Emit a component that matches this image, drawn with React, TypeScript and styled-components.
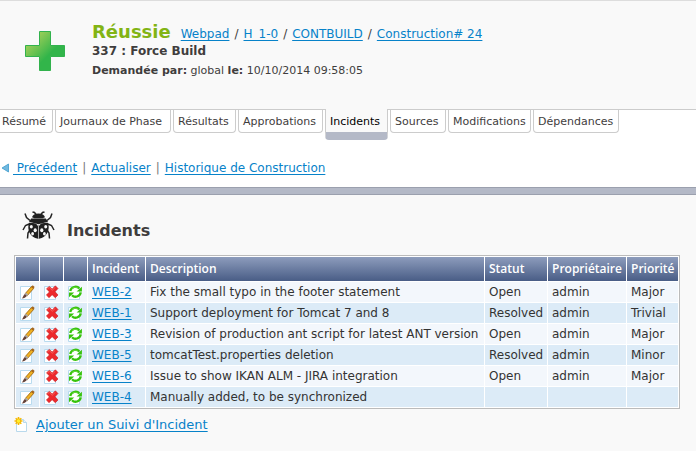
import React from "react";
import styled, { createGlobalStyle } from "styled-components";

const GlobalStyle = createGlobalStyle`
  body {
    margin: 0;
    background: #f9f9f9;
    color: #3f3d3d;
    font-family: Verdana, "DejaVu Sans", sans-serif;
    font-size: 12px;
    line-height: 16px;
    overflow-x: hidden;
  }
`;

const Link = styled.a`
  color: #0782c9;
  text-decoration: underline;
  text-underline-offset: 2px;
  white-space: pre;
`;

const Header = styled.header`
  display: flex;
  height: 88px;
  padding: 20px 0 0 24px;
  gap: 26px;
  border-top: 1px solid #ddd;
  background: #f9f9f9;
`;

const StatusIcon = styled.svg`
  flex: none;
  margin-top: 9px;
`;

const TitleRow = styled.div`
  display: flex;
  align-items: baseline;
  gap: 10px;
  white-space: nowrap;
`;

const Status = styled.h1`
  margin: 0;
  color: #82b414;
  font-size: 18px;
  line-height: 21px;
`;

const Crumbs = styled.nav`
  display: flex;
  gap: 5px;
`;

const BuildName = styled.h2`
  margin: 0;
  font-size: 12px;
  line-height: 19px;
`;

const Request = styled.p`
  margin: 0;
  font-size: 11px;
  line-height: 19px;
  white-space: nowrap;
`;

const Navigation = styled.div`
  height: 77px;
  border-top: 1px solid #ccc;
  background: #fff;
`;

const Tabs = styled.nav`
  display: flex;
  align-items: flex-start;
  gap: 2px;
  height: 30px;
  margin-left: -3px;
`;

const Tab = styled.a<{ $width: number; $active?: boolean }>`
  box-sizing: border-box;
  flex: none;
  width: ${(p) => p.$width}px;
  height: ${(p) => (p.$active ? 31 : 23)}px;
  margin-top: ${(p) => (p.$active ? -1 : 0)}px;
  padding-left: 4px;
  border: 1px solid #ccc;
  border-top: 0;
  border-bottom: ${(p) => (p.$active ? "8px solid #b4b9c7" : "1px solid #ccc")};
  border-radius: 0 0 4px 4px;
  background: ${(p) => (p.$active ? "#f9f9f9" : "#fff")};
  color: ${(p) => (p.$active ? "#000" : "#3f3d3d")};
  font-size: 11px;
  line-height: ${(p) => (p.$active ? 26 : 24)}px;
  text-decoration: none;
  white-space: nowrap;
`;

const Actions = styled.div`
  display: flex;
  align-items: center;
  gap: 5px;
  padding-top: 20px;
  color: #777;
`;

const BackLink = styled(Link)`
  margin-left: -1px;
`;

const Divider = styled.div`
  height: 6px;
  border: solid #9ba0ae;
  border-width: 1px 0;
  background: #b4b9c7;
`;

const Main = styled.main`
  padding: 16px 16px 18px 14px;
`;

const Heading = styled.div`
  display: flex;
  gap: 12px;
  padding-left: 8px;
  height: 44px;
`;

const HeadingText = styled.h2`
  margin: 10px 0 0;
  font-size: 16px;
  line-height: 20px;
`;

const Table = styled.table`
  border: 1px solid #bbb;
  border-spacing: 1px;
  background: #fff;
  color: #333;
  line-height: 16px;
`;

const HeadCell = styled.th<{ $width: number }>`
  box-sizing: border-box;
  width: ${(p) => p.$width}px;
  min-width: ${(p) => p.$width}px;
  height: 24px;
  padding: 0 3px 0 4px;
  background: linear-gradient(#8d9cbc, #495d86);
  color: #fff;
  font-family: "Open Sans", sans-serif;
  font-size: 12px;
  font-weight: 600;
  text-align: left;
  white-space: nowrap;
`;

const Row = styled.tr`
  background: #f3f7fc;
  &:nth-child(even) {
    background: #dcebf7;
  }
`;

const Cell = styled.td`
  height: 20px;
  padding: 0 3px 0 4px;
  white-space: nowrap;
`;

const IconCell = styled(Cell)`
  padding: 0 4px 0 3px;
`;

const IconButton = styled.button`
  display: block;
  width: 16px;
  height: 16px;
  padding: 0;
  border: 0;
  background: none;
  cursor: pointer;
`;

const AddRow = styled.div`
  display: flex;
  align-items: center;
  gap: 8px;
  padding-top: 8px;
`;

const AddLink = styled(Link)`
  font-size: 13px;
`;

const Page = () => (
  <path d="M1.5 2.5h11v13h-11z" fill="#fff" stroke="#b9dbef" />
);

const EditIcon = () => (
  <svg width="16" height="16" viewBox="0 0 16 16">
    <Page />
    <path d="M6.2 9.6 12.4 2.6l2.2 1.9-6.3 7.1z" fill="#f0b323" stroke="#a4660f" strokeWidth=".9" />
    <path d="m12 3 1.7-1.8 2 1.7-1.5 1.9z" fill="#a5661f" />
    <path d="M2.8 14.6c1.4-1.2 1.3-3.6 3.3-4.9l2.1 1.9c-1.2 2-3.4 2.9-5.4 3z" fill="#654238" />
    <path d="m5.8 10 1.3-1.2 2 1.8-1.2 1.3z" fill="#a9a8ab" />
  </svg>
);

const DeleteIcon = () => (
  <svg width="16" height="16" viewBox="0 0 16 16">
    <Page />
    <path d="m3.5 4.8 2.8-2.4L9.2 5l3.2-3.2L15 4.5l-3 3.2 3 3.3-2.7 2.7-3.2-3-3 3-2.7-2.6 3-3.2z" fill="#ed292c" stroke="#c51f24" strokeWidth=".6" />
    <path d="m4.5 4.8 1.8-1.3 2.9 2.8 3.2-3.1" fill="none" stroke="#fa6c66" strokeWidth=".8" />
  </svg>
);

const SyncIcon = () => (
  <svg width="16" height="16" viewBox="0 0 16 16">
    <Page />
    <g fill="none" stroke="#36c30a" strokeWidth="2.3">
      <path d="M3.2 7C4 3 9.5 1.2 12.3 4.4" />
      <path d="M13.8 8.4c-.8 4.2-6 5.8-8.8 2.8" />
    </g>
    <path d="M14.9 2.8v4.8H9.6zM2 13.3V8.5h5.2z" fill="#36c30a" />
    <path d="M4.8 4.9c1.8-2 4.7-2.2 6.5-.3" fill="none" stroke="#86e35c" strokeWidth=".7" />
  </svg>
);

const NewIcon = () => (
  <svg width="14" height="16" viewBox="0 0 14 16">
    <path d="M2.5 2.5h7l3 3v9h-10z" fill="#fff" stroke="#b9d9ec" />
    <path d="M9.5 2.5v3h3" fill="#e6f4fc" stroke="#b9d9ec" />
    <g stroke="#f6b900" strokeWidth="1.6">
      <path d="M4.5 0v8M.5 4h8M1.7 1.2l5.6 5.6M7.3 1.2 1.7 6.8" />
    </g>
    <circle cx="4.5" cy="4" r="2.2" fill="#fff02b" stroke="#f1a800" strokeWidth=".7" />
  </svg>
);

const BugIcon = () => (
  <svg width="33" height="30" viewBox="0 0 33 30">
    <g fill="none" stroke="#252525" strokeWidth="1.5">
      <path d="M14 3.5 12.5 1.5 10.5 1M19 3.5l1.5-2L22.5 1M8 9.5 4.5 6.5 3 2.5M25 9.5l3.5-3L30 2.5M7 13l-3.5 1.5L1 19M26 13l3.5 1.5L32 19M8 19l-2 3-.5 5.5M25 19l2 3 .5 5.5" />
    </g>
    <path d="M10 6.2Q11 2.4 16.5 2.4T23 6.2l-2.4 1h-8.2z" fill="#202020" />
    <path d="M9.2 7.6h14.6l2.2 3.2-9.5 2.4L7 10.8z" fill="#202020" />
    <path d="M7 11.8q8-.2 9 3.4v12.6C8.2 27 4.6 18.4 7 11.8zM26 11.8q-8-.2-9 3.4v12.6c7.8-.8 11.4-9.4 9-16z" fill="#202020" />
    <g fill="#f9f9f9">
      <ellipse cx="9.3" cy="15.8" rx="1.5" ry="1.8" />
      <ellipse cx="23.7" cy="15.8" rx="1.5" ry="1.8" />
      <ellipse cx="13.2" cy="19.3" rx="1.6" ry="2" />
      <ellipse cx="19.8" cy="19.3" rx="1.6" ry="2" />
      <ellipse cx="10.6" cy="22.8" rx="1.4" ry="1.7" />
      <ellipse cx="22.4" cy="22.8" rx="1.4" ry="1.7" />
    </g>
    <path d="M16.5 14v14" stroke="#aaa" />
  </svg>
);

const tabs = [
  { label: "Résumé", width: 56 },
  { label: "Journaux de Phase", width: 116 },
  { label: "Résultats", width: 63 },
  { label: "Approbations", width: 85 },
  { label: "Incidents", width: 63, active: true },
  { label: "Sources", width: 56 },
  { label: "Modifications", width: 83 },
  { label: "Dépendances", width: 86 },
];

const columns = [
  { label: "", width: 23 },
  { label: "", width: 23 },
  { label: "", width: 23 },
  { label: "Incident", width: 57 },
  { label: "Description", width: 338 },
  { label: "Statut", width: 62 },
  { label: "Propriétaire", width: 78 },
  { label: "Priorité", width: 51 },
];

const incidents = [
  ["WEB-2", "Fix the small typo in the footer statement", "Open", "admin", "Major"],
  ["WEB-1", "Support deployment for Tomcat 7 and 8", "Resolved", "admin", "Trivial"],
  ["WEB-3", "Revision of production ant script for latest ANT version", "Open", "admin", "Major"],
  ["WEB-5", "tomcatTest.properties deletion", "Resolved", "admin", "Minor"],
  ["WEB-6", "Issue to show IKAN ALM - JIRA integration", "Open", "admin", "Major"],
  ["WEB-4", "Manually added, to be synchronized", "", "", ""],
];

const rowActions = [
  { label: "Modifier", Icon: EditIcon },
  { label: "Supprimer", Icon: DeleteIcon },
  { label: "Synchroniser", Icon: SyncIcon },
];

export default function App() {
  return (
    <>
      <GlobalStyle />
      <Header>
        <StatusIcon width="42" height="42" viewBox="0 0 42 42">
          <defs>
            <linearGradient id="plus" x1="0" y1="0" x2="1" y2="1">
              <stop offset=".1" stopColor="#b2d35b" />
              <stop offset=".6" stopColor="#32b54a" />
            </linearGradient>
          </defs>
          <path d="M15.5 1.5h11v14h14v11h-14v14h-11v-14h-14v-11h14z" fill="url(#plus)" stroke="#32b24d" />
        </StatusIcon>
        <div>
          <TitleRow>
            <Status>Réussie</Status>
            <Crumbs>
              <Link href="#">Webpad</Link>
              <span>/</span>
              <Link href="#">H_1-0</Link>
              <span>/</span>
              <Link href="#">CONTBUILD</Link>
              <span>/</span>
              <Link href="#">Construction# 24</Link>
            </Crumbs>
          </TitleRow>
          <BuildName>337 : Force Build</BuildName>
          <Request>
            <b>Demandée par:</b> global <b>le:</b> 10/10/2014 09:58:05
          </Request>
        </div>
      </Header>
      <Navigation>
        <Tabs>
          {tabs.map((t) => (
            <Tab key={t.label} href="#" $width={t.width} $active={t.active}>
              {t.label}
            </Tab>
          ))}
        </Tabs>
        <Actions>
          <svg width="9" height="10" viewBox="0 0 9 10">
            <path d="M8.5 1v8L2 5z" fill="#71b9df" stroke="#3e9bcd" strokeWidth=".8" />
          </svg>
          <BackLink href="#"> Précédent</BackLink>|<Link href="#">Actualiser</Link>|
          <Link href="#">Historique de Construction</Link>
        </Actions>
      </Navigation>
      <Divider />
      <Main>
        <Heading>
          <BugIcon />
          <HeadingText>Incidents</HeadingText>
        </Heading>
        <Table>
          <thead>
            <tr>
              {columns.map((c, i) => (
                <HeadCell key={i} $width={c.width} scope="col">
                  {c.label}
                </HeadCell>
              ))}
            </tr>
          </thead>
          <tbody>
            {incidents.map(([id, ...values]) => (
              <Row key={id}>
                {rowActions.map(({ label, Icon }) => (
                  <IconCell key={label}>
                    <IconButton aria-label={`${label} ${id}`}>
                      <Icon />
                    </IconButton>
                  </IconCell>
                ))}
                <Cell>
                  <Link href="#">{id}</Link>
                </Cell>
                {values.map((v, i) => (
                  <Cell key={i}>{v}</Cell>
                ))}
              </Row>
            ))}
          </tbody>
        </Table>
        <AddRow>
          <NewIcon />
          <AddLink href="#">Ajouter un Suivi d'Incident</AddLink>
        </AddRow>
      </Main>
    </>
  );
}
